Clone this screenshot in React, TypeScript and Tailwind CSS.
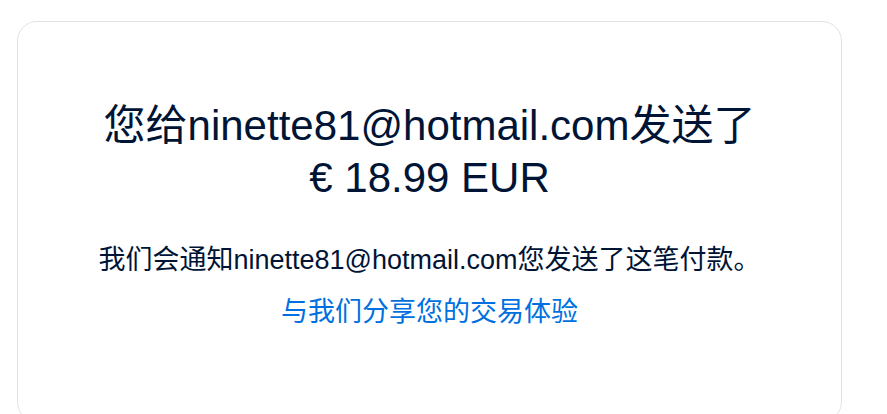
export default function App() {
  return (
    <div
      className="min-h-screen bg-white pl-[17px] pt-[21px] text-[#001435]"
      style={{ fontFamily: '"Liberation Sans", "Noto Sans CJK SC", sans-serif' }}
    >
      <div className="flex h-[401px] w-[825px] flex-col items-center rounded-[20px] border border-[#e3e3e3] px-12 pt-[78px] text-center">
        <h1 className="text-[42px] font-normal leading-[52px]">
          您给ninette81@hotmail.com发送了
          <br />
          € 18.99 EUR
        </h1>
        <p className="mt-[38px] text-[27px] leading-[36px]">
          我们会通知ninette81@hotmail.com您发送了这笔付款。
        </p>
        <a href="#" className="mt-[16px] text-[27px] leading-[36px] text-[#0070e0]">
          与我们分享您的交易体验
        </a>
      </div>
    </div>
  );
}
